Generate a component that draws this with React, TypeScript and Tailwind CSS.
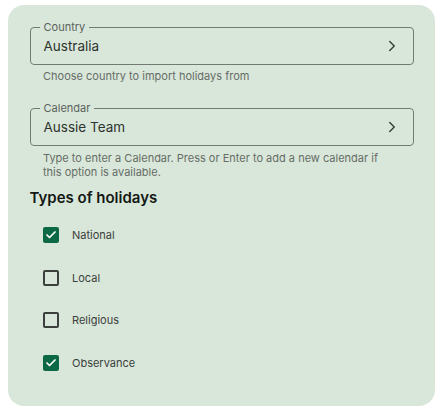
import { ChevronRight, Check } from "lucide-react";

const font = { fontFamily: "Inter, 'Noto Sans', sans-serif" };

const holidayTypes = [
  { label: "National", checked: true },
  { label: "Local", checked: false },
  { label: "Religious", checked: false },
  { label: "Observance", checked: true },
];

function OutlinedSelect({ label, value }: { label: string; value: string }) {
  return (
    <div className="relative h-[38px] rounded-[4px] border border-[#737a74] flex items-center pl-[13px] pr-[12px]">
      <span className="absolute -top-[8px] left-[9px] px-[4px] bg-[#d9e7da] text-[11px] leading-[14px] text-[#5b625c]">
        {label}
      </span>
      <span className="flex-1 text-[13.5px] text-[#2d332e]">{value}</span>
      <ChevronRight size={18} strokeWidth={2} className="text-[#3a403b]" />
    </div>
  );
}

export default function App() {
  return (
    <div className="w-[439px] h-[409px] bg-white pt-[5px] pl-[8px]" style={font}>
      <div className="w-[427px] h-[401px] rounded-[16px] bg-[#d9e7da] pt-[22px] px-[21.5px]">
        <OutlinedSelect label="Country" value="Australia" />
        <p className="mt-[4px] px-[13.5px] text-[11px] leading-[14px] text-[#666d67]">
          Choose country to import holidays from
        </p>

        <div className="mt-[25px]">
          <OutlinedSelect label="Calendar" value="Aussie Team" />
        </div>
        <p className="mt-[5px] pl-[13.5px] pr-[20px] text-[11px] leading-[14px] text-[#666d67]">
          Type to enter a Calendar. Press or Enter to add a new calendar if this option is available.
        </p>

        <h2 className="mt-[9px] text-[15px] leading-[20px] font-semibold text-[#141814]">
          Types of holidays
        </h2>

        <ul className="mt-[6px]">
          {holidayTypes.map((t) => (
            <li key={t.label} className="h-[42.5px] flex items-center pl-[13.5px] gap-[13px]">
              {t.checked ? (
                <span className="w-[16px] h-[16px] rounded-[2px] bg-[#0b6a45] flex items-center justify-center">
                  <Check size={12} strokeWidth={3.5} className="text-white" />
                </span>
              ) : (
                <span className="w-[16px] h-[16px] rounded-[2px] border-2 border-[#3b403c]" />
              )}
              <span className="text-[11px] text-[#3a403b]">{t.label}</span>
            </li>
          ))}
        </ul>
      </div>
    </div>
  );
}
